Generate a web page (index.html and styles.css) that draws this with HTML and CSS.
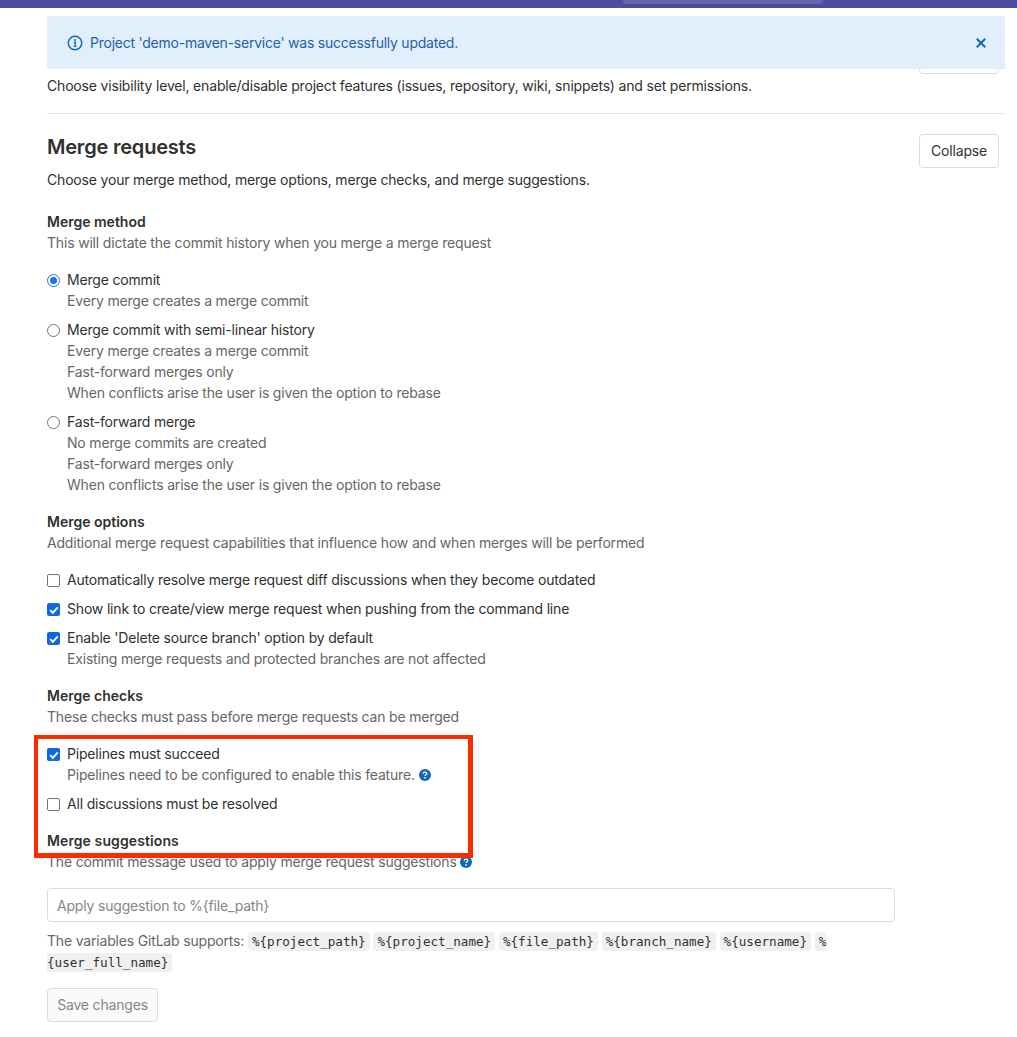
FILE: index.html
```html
<!DOCTYPE html>
<html lang="en">
<head>
    <meta charset="UTF-8">
    <meta name="viewport" content="width=device-width, initial-scale=1.0">
    <title>Merge requests</title>
    <link rel="stylesheet" href="styles.css">
</head>
<body>
    <nav class="navbar">
        <div class="nav-search"></div>
    </nav>

    <div class="flash">
        <svg class="flash-icon" width="16" height="16" viewBox="0 0 16 16" fill="none">
            <circle cx="8" cy="8" r="6.75" stroke="#1068bf" stroke-width="1.5"/>
            <circle cx="8" cy="4.9" r="1" fill="#1068bf"/>
            <path d="M6.8 7.2H8.2V11.2M6.8 11.4H9.4" stroke="#1068bf" stroke-width="1.4"/>
        </svg>
        <span class="flash-text">Project 'demo-maven-service' was successfully updated.</span>
        <svg class="flash-close" width="16" height="16" viewBox="0 0 16 16" fill="none">
            <path d="M3.8 3.8L12.2 12.2M12.2 3.8L3.8 12.2" stroke="#1068bf" stroke-width="2"/>
        </svg>
    </div>

    <main class="content">
        <section class="settings-top">
            <button class="btn btn-hidden">Expand</button>
            <p>Choose visibility level, enable/disable project features (issues, repository, wiki, snippets) and set permissions.</p>
        </section>

        <section class="settings">
            <div class="settings-header">
                <div>
                    <h2>Merge requests</h2>
                    <p>Choose your merge method, merge options, merge checks, and merge suggestions.</p>
                </div>
                <button class="btn">Collapse</button>
            </div>

            <div class="group group-first">
                <h3>Merge method</h3>
                <p class="help">This will dictate the commit history when you merge a merge request</p>
                <div class="options">
                    <div class="option">
                        <span class="radio radio-on"></span>
                        <div>
                            <div class="label">Merge commit</div>
                            <div class="help">Every merge creates a merge commit</div>
                        </div>
                    </div>
                    <div class="option">
                        <span class="radio"></span>
                        <div>
                            <div class="label">Merge commit with semi-linear history</div>
                            <div class="help">Every merge creates a merge commit</div>
                            <div class="help">Fast-forward merges only</div>
                            <div class="help">When conflicts arise the user is given the option to rebase</div>
                        </div>
                    </div>
                    <div class="option">
                        <span class="radio"></span>
                        <div>
                            <div class="label">Fast-forward merge</div>
                            <div class="help">No merge commits are created</div>
                            <div class="help">Fast-forward merges only</div>
                            <div class="help">When conflicts arise the user is given the option to rebase</div>
                        </div>
                    </div>
                </div>
            </div>

            <div class="group">
                <h3>Merge options</h3>
                <p class="help">Additional merge request capabilities that influence how and when merges will be performed</p>
                <div class="options">
                    <div class="option">
                        <span class="check"></span>
                        <div class="label">Automatically resolve merge request diff discussions when they become outdated</div>
                    </div>
                    <div class="option">
                        <span class="check check-on">
                            <svg width="14" height="14" viewBox="0 0 14 14" fill="none"><path d="M3.2 7.2L5.8 9.8L10.8 4.4" stroke="#fff" stroke-width="1.9"/></svg>
                        </span>
                        <div class="label">Show link to create/view merge request when pushing from the command line</div>
                    </div>
                    <div class="option">
                        <span class="check check-on">
                            <svg width="14" height="14" viewBox="0 0 14 14" fill="none"><path d="M3.2 7.2L5.8 9.8L10.8 4.4" stroke="#fff" stroke-width="1.9"/></svg>
                        </span>
                        <div>
                            <div class="label">Enable 'Delete source branch' option by default</div>
                            <div class="help">Existing merge requests and protected branches are not affected</div>
                        </div>
                    </div>
                </div>
            </div>

            <div class="group">
                <h3>Merge checks</h3>
                <p class="help">These checks must pass before merge requests can be merged</p>
                <div class="options">
                    <div class="option">
                        <span class="check check-on">
                            <svg width="14" height="14" viewBox="0 0 14 14" fill="none"><path d="M3.2 7.2L5.8 9.8L10.8 4.4" stroke="#fff" stroke-width="1.9"/></svg>
                        </span>
                        <div>
                            <div class="label">Pipelines must succeed</div>
                            <div class="help">Pipelines need to be configured to enable this feature.
                                <svg class="q-icon" width="12" height="12" viewBox="0 0 12 12"><circle cx="6" cy="6" r="6" fill="#1068bf"/><path d="M4.2 4.6C4.3 3.6 5 3.1 6 3.1C7 3.1 7.8 3.7 7.8 4.6C7.8 5.7 6.2 5.8 6.1 7" stroke="#fff" stroke-width="1.3" fill="none"/><circle cx="6" cy="8.8" r=".85" fill="#fff"/></svg>
                            </div>
                        </div>
                    </div>
                    <div class="option">
                        <span class="check"></span>
                        <div class="label">All discussions must be resolved</div>
                    </div>
                </div>
            </div>

            <div class="group">
                <h3 class="wide">Merge suggestions</h3>
                <p class="help">The commit message used to apply merge request suggestions
                    <svg class="q-icon" width="12" height="12" viewBox="0 0 12 12"><circle cx="6" cy="6" r="6" fill="#1068bf"/><path d="M4.2 4.6C4.3 3.6 5 3.1 6 3.1C7 3.1 7.8 3.7 7.8 4.6C7.8 5.7 6.2 5.8 6.1 7" stroke="#fff" stroke-width="1.3" fill="none"/><circle cx="6" cy="8.8" r=".85" fill="#fff"/></svg>
                </p>
                <input class="text-input" type="text" placeholder="Apply suggestion to %{file_path}">
                <p class="help vars">The variables GitLab supports: <code>%{project_path}</code> <code>%{project_name}</code> <code>%{file_path}</code> <code>%{branch_name}</code> <code>%{username}</code> <code>%<wbr>{user_full_name}</code></p>
                <button class="btn btn-disabled">Save changes</button>
            </div>
        </section>
    </main>

    <div class="highlight"></div>
</body>
</html>
```

FILE: styles.css
```css
* {
    margin: 0;
    padding: 0;
    box-sizing: border-box;
}

html, body {
    height: 1037px;
    overflow: hidden;
}

body {
    background-color: #fff;
    color: #303030;
    font-family: Inter, 'Noto Sans', sans-serif;
    font-size: 14px;
    letter-spacing: -0.18px;
    line-height: 21px;
    position: relative;
}

.navbar {
    background-color: #4f4ca0;
    height: 8px;
    position: relative;
}

.nav-search {
    background-color: #6865b0;
    border-radius: 0 0 4px 4px;
    height: 4px;
    margin-left: 623px;
    width: 200px;
}

.flash {
    position: absolute;
    top: 16px;
    left: 47px;
    width: 958px;
    height: 53px;
    background-color: #e1effc;
    color: #1f5fa8;
    display: flex;
    align-items: center;
    padding: 0 16px 0 20px;
    z-index: 2;
}

.flash-icon {
    margin-right: 7px;
}

.flash-text {
    flex: 1;
    letter-spacing: -0.24px;
}

.content {
    padding: 0 12px 0 47px;
}

.settings-top {
    position: relative;
    padding-top: 67px;
    padding-bottom: 17px;
    border-bottom: 1px solid #e5e5e5;
}

.btn {
    background-color: #fff;
    border: 1px solid #dcdcde;
    border-radius: 4px;
    color: #303030;
    font-family: inherit;
    font-size: 14px;
    letter-spacing: inherit;
    height: 34px;
    padding: 0 0 2px;
    width: 80px;
}

.btn-hidden {
    position: absolute;
    top: 32px;
    right: 6px;
}

.settings {
    padding-top: 20px;
}

.settings-header {
    display: flex;
    justify-content: space-between;
    align-items: flex-start;
    padding-right: 6px;
}

.settings-header h2 {
    font-size: 20px;
    font-weight: 600;
    letter-spacing: -0.2px;
    line-height: 26px;
    margin-bottom: 9px;
}

.group {
    margin-top: 16px;
}

.group-first {
    margin-top: 21px;
}

h3 {
    font-size: 14px;
    font-weight: 600;
    letter-spacing: 0;
    line-height: 21px;
}

h3.wide {
    letter-spacing: 0.1px;
}

.help {
    color: #666;
}

.options {
    display: flex;
    flex-direction: column;
    gap: 8px;
    margin-top: 16px;
}

.option {
    display: flex;
    align-items: flex-start;
    gap: 7px;
}

.radio, .check {
    background-color: #fff;
    border: 1px solid #757575;
    flex: none;
    height: 13px;
    margin-top: 5px;
    width: 13px;
}

.radio {
    border-radius: 50%;
}

.radio-on {
    border: 1px solid #1a73e8;
    position: relative;
}

.radio-on::after {
    content: "";
    position: absolute;
    inset: 2px;
    border-radius: 50%;
    background-color: #1a73e8;
}

.check {
    border-radius: 2px;
}

.check-on {
    background-color: #1068e0;
    border: none;
    display: block;
}

.check-on svg {
    display: block;
    margin: -0.5px;
}

.q-icon {
    vertical-align: -1px;
}

.text-input {
    border: 1px solid #dcdcde;
    border-radius: 4px;
    display: block;
    font-family: inherit;
    font-size: 14px;
    letter-spacing: inherit;
    height: 34px;
    margin-top: 16px;
    padding: 0 9px;
    width: 848px;
}

.text-input::placeholder {
    color: #868686;
}

.vars {
    margin-top: 8px;
    width: 848px;
}

code {
    background-color: #f0f0f0;
    border-radius: 4px;
    color: #303030;
    font-family: 'DejaVu Sans Mono', 'Liberation Mono', monospace;
    font-size: 12.6px;
    letter-spacing: 0;
    line-height: 1;
    padding: 2px 4px;
}

.btn-disabled {
    background-color: #fafafa;
    color: #868686;
    display: block;
    margin-top: 16px;
    width: 111px;
}

.highlight {
    position: absolute;
    top: 735px;
    left: 34px;
    width: 439px;
    height: 123px;
    border-style: solid;
    border-color: #fb2c00;
    border-width: 4px 5px 5px 4px;
    z-index: 3;
}
```
